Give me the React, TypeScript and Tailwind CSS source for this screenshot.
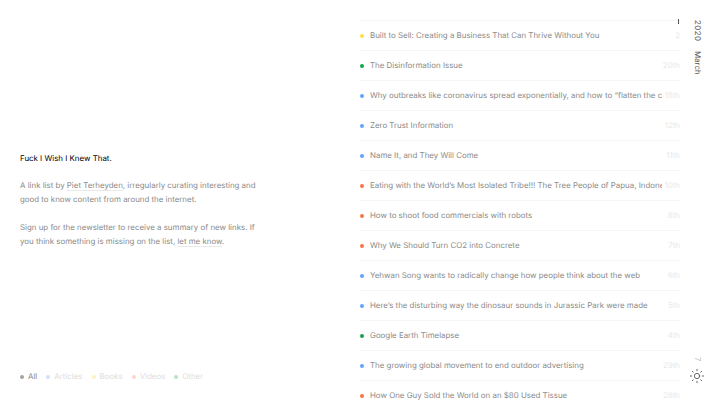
import { Sun } from 'lucide-react';

const links = [
  { title: 'Built to Sell: Creating a Business That Can Thrive Without You', date: '2', dot: 'bg-[#fde047]' },
  { title: 'The Disinformation Issue', date: '20th', dot: 'bg-[#16a34a]' },
  { title: 'Why outbreaks like coronavirus spread exponentially, and how to “flatten the curve”', date: '15th', dot: 'bg-[#60a5fa]' },
  { title: 'Zero Trust Information', date: '12th', dot: 'bg-[#60a5fa]' },
  { title: 'Name It, and They Will Come', date: '11th', dot: 'bg-[#60a5fa]' },
  { title: 'Eating with the World’s Most Isolated Tribe!!! The Tree People of Papua, Indonesia', date: '10th', dot: 'bg-[#f97344]' },
  { title: 'How to shoot food commercials with robots', date: '8th', dot: 'bg-[#f97344]' },
  { title: 'Why We Should Turn CO2 into Concrete', date: '7th', dot: 'bg-[#f97344]' },
  { title: 'Yehwan Song wants to radically change how people think about the web', date: '6th', dot: 'bg-[#60a5fa]' },
  { title: 'Here’s the disturbing way the dinosaur sounds in Jurassic Park were made', date: '5th', dot: 'bg-[#60a5fa]' },
  { title: 'Google Earth Timelapse', date: '4th', dot: 'bg-[#16a34a]' },
  { title: 'The growing global movement to end outdoor advertising', date: '29th', dot: 'bg-[#60a5fa]' },
  { title: 'How One Guy Sold the World on an $80 Used Tissue', date: '28th', dot: 'bg-[#f97344]' }
];

const filters = [
  { name: 'All', dot: 'bg-[#a3a3a3]', text: 'text-[#888888]' },
  { name: 'Articles', dot: 'bg-[#cfe2fb]', text: 'text-[#dddddd]' },
  { name: 'Books', dot: 'bg-[#fdf3c0]', text: 'text-[#dddddd]' },
  { name: 'Videos', dot: 'bg-[#fcd5c8]', text: 'text-[#dddddd]' },
  { name: 'Other', dot: 'bg-[#b5e3c6]', text: 'text-[#dddddd]' }
];

export default function App() {
  return (
    <div className="flex h-[400px] w-[720px] overflow-hidden bg-white font-['Inter',sans-serif] text-[7.9px] text-[#8a8a8a] [text-rendering:geometricPrecision]">
      {/* Intro */}
      <div className="flex w-[360px] shrink-0 flex-col pl-5 pt-[151px] pb-4">
        <h1 className="text-[7.9px] font-normal leading-[14px] text-black">Fuck I Wish I Knew That.</h1>
        <p className="mt-[13px] w-[240px] leading-[14px]">
          A link list by <a className="border-b border-[#e8e8e8]">Piet Terheyden</a>, irregularly curating interesting and good to know content from around the internet.
        </p>
        <p className="mt-[14px] w-[240px] leading-[14px]">
          Sign up for the newsletter to receive a summary of new links. If you think something is missing on the list, <a className="border-b border-[#e8e8e8]">let me know</a>.
        </p>
        <div className="mt-auto flex gap-[9px] leading-[15px]">
          {filters.map((f) => (
            <div key={f.name} className="flex items-center gap-[4px]">
              <span className={`h-[4px] w-[4px] rounded-full ${f.dot}`}></span>
              <span className={f.text}>{f.name}</span>
            </div>
          ))}
        </div>
      </div>

      {/* Link list */}
      <div className="relative w-[320px] shrink-0 pt-5">
        <span className="absolute top-[19px] right-[1px] h-[5px] w-px bg-[#555555]"></span>
        {links.map((link) => (
          <div key={link.title} className="flex h-[30px] items-center border-t border-[#f5f5f5]">
            <span className={`h-[4px] w-[4px] shrink-0 rounded-full ${link.dot}`}></span>
            <span className="ml-[6px] w-[292px] overflow-hidden whitespace-nowrap">{link.title}</span>
            <span className="ml-auto shrink-0 text-[#e8e8e8]">{link.date}</span>
          </div>
        ))}
      </div>

      {/* Side rail */}
      <div className="flex w-[34px] flex-col items-center pt-5 pb-4 text-[#555555]">
        <div className="flex gap-[9px] leading-none [writing-mode:vertical-rl]">
          <span className="tracking-[0.5px]">2020</span>
          <span>March</span>
        </div>
        <span className="mt-auto mb-[7px] leading-none text-[#bbbbbb] [writing-mode:vertical-rl]">7</span>
        <Sun className="h-4 w-4 text-[#555555]" strokeWidth={1.3} />
      </div>
    </div>
  );
}
